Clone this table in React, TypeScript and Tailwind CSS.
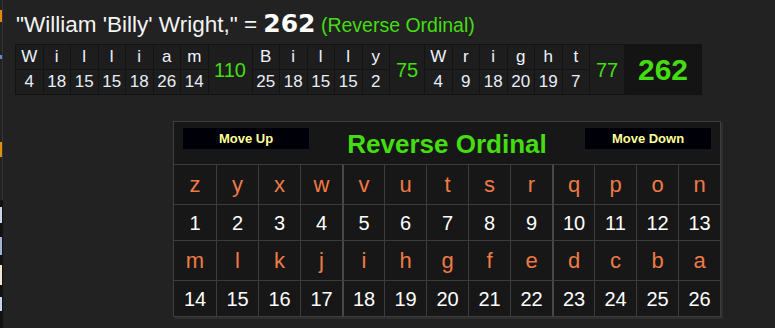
const words = [
  { letters: [["W", 4], ["i", 18], ["l", 15], ["l", 15], ["i", 18], ["a", 26], ["m", 14]], total: 110, w: "w-[44px]" },
  { letters: [["B", 25], ["i", 18], ["l", 15], ["l", 15], ["y", 2]], total: 75, w: "w-[35px]" },
  { letters: [["W", 4], ["r", 9], ["i", 18], ["g", 20], ["h", 19], ["t", 7]], total: 77, w: "w-[35px]" },
];

const alphabet = "zyxwvutsrqponmlkjihgfedcba".split("");

function Breakdown() {
  return (
    <div className="flex border border-[#121212] bg-[#1d1d1d] w-fit">
      {words.map((word, wi) => (
        <div key={wi} className="flex">
          {word.letters.map(([ch, n], i) => (
            <div key={i} className="flex flex-col w-[27.5px] border-r border-[#131313]">
              <div className="h-[25px] flex items-center justify-center text-[17px] text-[#eef4ff] border-b border-[#131313]">
                {ch}
              </div>
              <div className="h-[24px] flex items-center justify-center text-[17px] text-[#e8eef8]">{n}</div>
            </div>
          ))}
          <div className={`${word.w} flex items-center justify-center text-[20px] text-[#44dd11] border-r border-[#131313]`}>
            {word.total}
          </div>
        </div>
      ))}
      <div className="w-[76px] flex items-center justify-center bg-[#141414] text-[30px] font-bold text-[#44dd11]">
        262
      </div>
    </div>
  );
}

function Cell({ i, children, tall, color }: { i: number; children: React.ReactNode; tall: boolean; color: string }) {
  const thick = i === 4 || i === 9;
  return (
    <div
      className={`${tall ? "h-[40px] text-[22px]" : "h-[36px] text-[20px]"} ${color} flex items-center justify-center border-t border-[#3c3c3c] ${
        i === 0 ? "" : thick ? "border-l-2 border-l-[#474747]" : "border-l border-l-[#3c3c3c]"
      }`}
    >
      {children}
    </div>
  );
}

function Chart() {
  return (
    <div className="w-[548px] border border-[#3e3e3e] bg-[#171717] shadow-[2px_2px_0_#2e2e2e]">
      <div className="h-[42px] flex items-start justify-between px-[9px] pt-[6px]">
        <div className="w-[126px] h-[21px] bg-[#000008] flex items-center justify-center text-[13px] font-bold text-[#ffff99]">
          Move Up
        </div>
        <div className="text-[26px] font-bold text-[#44dd11] leading-none mt-[3px]">Reverse Ordinal</div>
        <div className="w-[126px] h-[21px] bg-[#000008] flex items-center justify-center text-[13px] font-bold text-[#ffff99]">
          Move Down
        </div>
      </div>
      {[0, 1].map((half) => (
        <div key={half}>
          <div className="grid grid-cols-[repeat(13,minmax(0,1fr))]">
            {alphabet.slice(half * 13, half * 13 + 13).map((ch, i) => (
              <Cell key={i} i={i} tall color="text-[#f07a45]">
                {ch}
              </Cell>
            ))}
          </div>
          <div className="grid grid-cols-[repeat(13,minmax(0,1fr))]">
            {alphabet.slice(half * 13, half * 13 + 13).map((_, i) => (
              <Cell key={i} i={i} tall={false} color="text-white">
                {half * 13 + i + 1}
              </Cell>
            ))}
          </div>
        </div>
      ))}
    </div>
  );
}

export default function App() {
  return (
    <div className="h-[328px] w-[775px] overflow-hidden bg-[#222222] flex font-['Liberation_Sans',Arial,sans-serif]">
      <div className="w-[3px] shrink-0 flex flex-col">
        <div className="h-[200px] border-r border-[#343434] flex flex-col">
          <div className="mt-[10px] h-[12px] w-[2px] bg-[#e2860f]" />
          <div className="mt-[33px] h-[4px] w-[2px] bg-[#5a8ccc]" />
          <div className="mt-[83px] h-[15px] w-[2px] bg-[#e0900e]" />
        </div>
        <div className="flex-1 bg-[#111111] flex flex-col">
          <div className="mt-[7px] h-[16px] w-[2px] bg-[#c9d6ea]" />
          <div className="mt-[14px] h-[18px] w-[2px] bg-[#9fb3d6]" />
          <div className="mt-[10px] h-[20px] w-[2px] bg-[#f2e6d2]" />
          <div className="mt-[12px] h-[14px] w-[2px] bg-[#c9d6ea]" />
        </div>
      </div>
      <div className="flex-1 flex flex-col">
        <div className="ml-[13px] mt-[5px] h-[31px] flex items-baseline whitespace-pre">
          <span className="text-[22.5px] text-[#f4f4f4]">"William 'Billy' Wright," = </span>
          <span className="text-[25px] font-bold text-white font-['DejaVu_Sans',sans-serif]">262</span>
          <span className="text-[19.5px] text-[#44dd11]"> (Reverse Ordinal)</span>
        </div>
        <div className="ml-[12px] mt-[8px]">
          <Breakdown />
        </div>
        <div className="ml-[170px] mt-[26px]">
          <Chart />
        </div>
      </div>
    </div>
  );
}
